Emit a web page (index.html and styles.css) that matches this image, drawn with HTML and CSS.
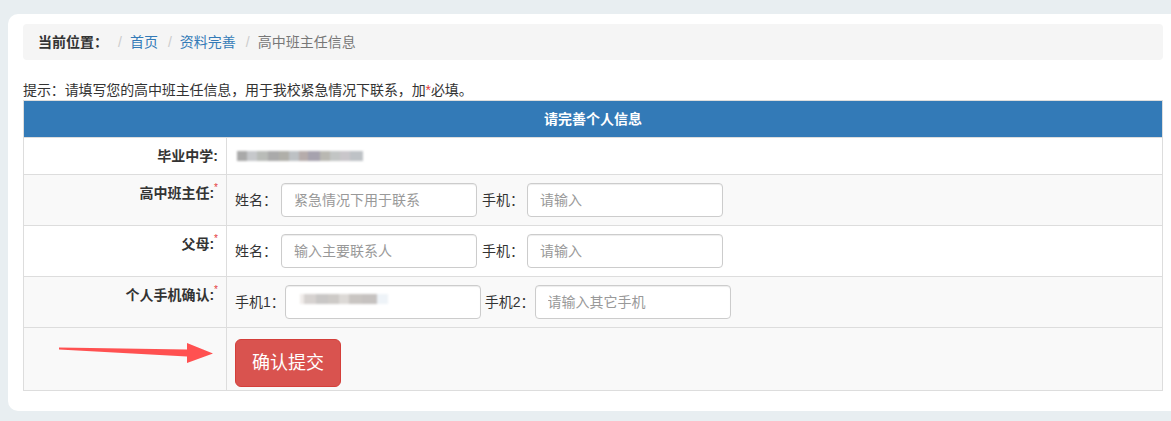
FILE: index.html
```html
<!DOCTYPE html>
<html lang="zh-CN">
<head>
<meta charset="utf-8">
<title>高中班主任信息</title>
<link rel="stylesheet" href="styles.css">
</head>
<body>
<div class="page">
  <div class="card">
    <ol class="breadcrumb">
      <li class="bc-title">当前位置：</li>
      <li><a href="#">首页</a></li>
      <li><a href="#">资料完善</a></li>
      <li class="bc-active">高中班主任信息</li>
    </ol>
    <p class="hint">提示：请填写您的高中班主任信息，用于我校紧急情况下联系，加<span class="req">*</span>必填。</p>
    <table class="info-table">
      <thead>
        <tr><th colspan="2" class="head-cell">请完善个人信息</th></tr>
      </thead>
      <tbody>
        <tr class="row-white">
          <th class="label-cell">毕业中学:</th>
          <td class="value-cell"><span class="blur blur-school"></span></td>
        </tr>
        <tr class="row-gray">
          <th class="label-cell">高中班主任:<sup class="req-sup">*</sup></th>
          <td class="value-cell">
            <div class="fields">
              <span class="f-label">姓名：</span>
              <input class="f-input" type="text" placeholder="紧急情况下用于联系">
              <span class="f-label f-gap">手机：</span>
              <input class="f-input f-input-b" type="text" placeholder="请输入">
            </div>
          </td>
        </tr>
        <tr class="row-white">
          <th class="label-cell">父母:<sup class="req-sup">*</sup></th>
          <td class="value-cell">
            <div class="fields">
              <span class="f-label">姓名：</span>
              <input class="f-input" type="text" placeholder="输入主要联系人">
              <span class="f-label f-gap">手机：</span>
              <input class="f-input f-input-b" type="text" placeholder="请输入">
            </div>
          </td>
        </tr>
        <tr class="row-gray">
          <th class="label-cell">个人手机确认:<sup class="req-sup">*</sup></th>
          <td class="value-cell">
            <div class="fields">
              <span class="f-label">手机1：</span>
              <span class="input-wrap">
                <input class="f-input f-input-tight" type="text">
                <span class="blur blur-phone"></span>
              </span>
              <span class="f-label f-gap-sm">手机2：</span>
              <input class="f-input f-input-c" type="text" placeholder="请输入其它手机">
            </div>
          </td>
        </tr>
        <tr class="row-gray row-submit">
          <th class="label-cell arrow-cell">
            <svg class="arrow" width="160" height="24" viewBox="0 0 160 24">
              <polygon points="2,5.5 130,7.5 130,1 156,11.5 130,21 130,14.5 2,7.5" fill="#ff5151"/>
            </svg>
          </th>
          <td class="value-cell submit-cell">
            <button class="btn-submit" type="button">确认提交</button>
          </td>
        </tr>
      </tbody>
    </table>
  </div>
</div>
</body>
</html>
```

FILE: styles.css
```css
html, body {
  margin: 0;
  padding: 0;
  overflow: hidden;
}

body {
  background: #e8eef1;
  font-family: "Liberation Sans", "Noto Sans CJK SC", sans-serif;
  font-size: 14px;
  line-height: 20px;
  color: #333;
}

.page {
  padding: 14px 0 11px 8px;
}

.card {
  background: #fff;
  border-radius: 10px 0 0 10px;
  padding: 10px 8px 20px 15px;
}

.breadcrumb {
  list-style: none;
  margin: 0 0 20px 0;
  padding: 8px 15px;
  background: #f5f5f5;
  border-radius: 4px;
  display: flex;
  align-items: center;
}

.breadcrumb li {
  white-space: nowrap;
}

.breadcrumb li + li::before {
  content: "/";
  color: #ccc;
  padding: 0 8px 0 10px;
}

.bc-title {
  font-weight: bold;
  color: #333;
}

.breadcrumb a {
  color: #337ab7;
  text-decoration: none;
}

.bc-active {
  color: #777;
}

.hint {
  margin: 0;
  line-height: 20px;
  letter-spacing: -0.12px;
}

.req {
  color: #e4393c;
}

.info-table {
  width: 100%;
  border-collapse: collapse;
  border: 1px solid #ddd;
}

.info-table th,
.info-table td {
  border: 1px solid #ddd;
  padding: 8px;
  line-height: 20px;
  vertical-align: top;
}

.head-cell {
  background: #337ab7;
  color: #fff;
  font-weight: bold;
  text-align: center;
}

.row-white {
  background: #fff;
}

.row-gray {
  background: #f9f9f9;
}

.label-cell {
  width: 186px;
  text-align: right;
  font-weight: bold;
  color: #333;
  white-space: nowrap;
}

.req-sup {
  color: #e4393c;
  font-size: 10px;
  font-weight: normal;
  vertical-align: top;
  line-height: 12px;
  position: relative;
  top: -1px;
}

.value-cell {
  text-align: left;
}

.blur {
  display: inline-block;
  filter: blur(0.8px);
}

.blur-school {
  width: 126px;
  height: 10px;
  margin: 5px 0 0 2px;
  vertical-align: top;
  background: linear-gradient(to right,
    #a9a9a9 0, #a9a9a9 8%,
    #c6c8cb 8%, #c6c8cb 16%,
    #b9bcb8 16%, #b9bcb8 25%,
    #aaaaaa 25%, #aaaaaa 33%,
    #b0afa9 33%, #b0afa9 41%,
    #bdc1c4 41%, #bdc1c4 49%,
    #b6acab 49%, #b6acab 56%,
    #a6a2ae 56%, #a6a2ae 66%,
    #b9b8b2 66%, #b9b8b2 74%,
    #c2c5c4 74%, #c2c5c4 82%,
    #c9c6ca 82%, #c9c6ca 90%,
    #bec2c6 90%, #bec2c6 100%);
}

.fields {
  display: flex;
  align-items: center;
}

.f-label {
  white-space: nowrap;
  color: #333;
}

.f-gap {
  margin-left: 5px;
}

.f-gap-sm {
  margin-left: 4px;
}

.f-input {
  box-sizing: border-box;
  width: 196px;
  height: 34px;
  margin-left: 4px;
  padding: 6px 12px;
  border: 1px solid #ccc;
  border-radius: 4px;
  background: #fff;
  font-family: "Liberation Sans", "Noto Sans CJK SC", sans-serif;
  font-size: 14px;
  color: #555;
  box-shadow: inset 0 1px 1px rgba(0, 0, 0, 0.075);
  outline: none;
}

.f-input::placeholder {
  color: #999;
}

.f-input-b {
  margin-left: 3px;
}

.f-input-c {
  margin-left: 0;
}

.input-wrap {
  position: relative;
  display: block;
  height: 34px;
}

.f-input-tight {
  display: block;
  margin-left: 0;
}

.blur-phone {
  position: absolute;
  left: 15px;
  top: 9px;
  width: 88px;
  height: 10px;
  background: linear-gradient(to right,
    #f0ecea 0, #f0ecea 5%,
    #d6d2d0 5%, #d6d2d0 18%,
    #c9c7c6 18%, #c9c7c6 32%,
    #cdcac7 32%, #cdcac7 44%,
    #dcd9d6 44%, #dcd9d6 56%,
    #c9c5c2 56%, #c9c5c2 70%,
    #c6c2c0 70%, #c6c2c0 88%,
    #eef3f8 88%, #eef3f8 100%);
}

.row-submit td,
.row-submit th {
  padding: 11px 8px 3px 8px;
}

.arrow-cell {
  position: relative;
}

.arrow {
  position: absolute;
  left: 33px;
  top: 14px;
  display: block;
}

.btn-submit {
  display: block;
  height: 48px;
  padding: 0 16px;
  border: 1px solid #d43f3a;
  border-radius: 6px;
  background: #d9534f;
  color: #fff;
  font-family: "Liberation Sans", "Noto Sans CJK SC", sans-serif;
  font-size: 18px;
  line-height: 46px;
  cursor: pointer;
}
```
